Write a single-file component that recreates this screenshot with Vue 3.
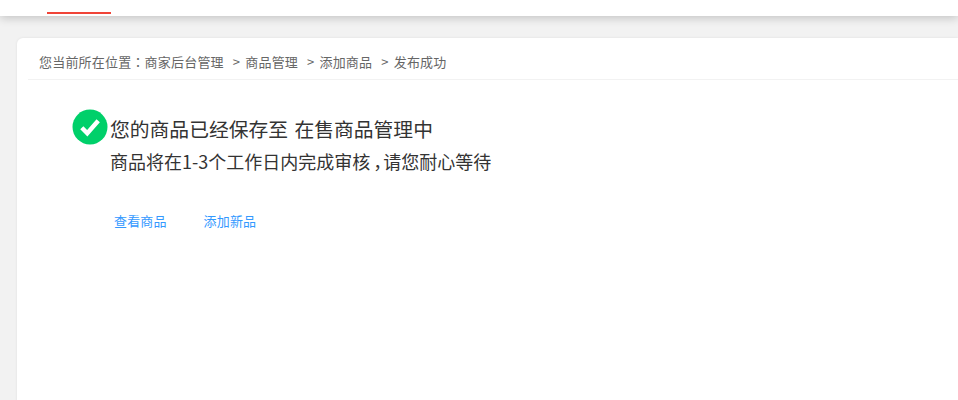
<script setup>
const crumbs = ['商品管理', '添加商品', '发布成功']
</script>

<template>
  <div class="page">
    <header class="topbar">
      <span class="tab-line"></span>
    </header>
    <main class="card">
      <div class="crumbs">
        <span>您当前所在位置<span class="colon">：</span>商家后台管理</span>
        <span v-for="c in crumbs" :key="c" class="crumb"><i>&gt;</i>{{ c }}</span>
      </div>
      <section class="result">
        <div class="headline">
          <svg class="ok" viewBox="0 0 36 36" width="36" height="36">
            <circle cx="18" cy="18" r="17.5" fill="#00d06a" />
            <path d="M9.8 18.8 L15.3 24.3 L26.2 11.8" fill="none" stroke="#fff" stroke-width="4.4" />
          </svg>
          <h1>您的商品已经保存至 在售商品管理中</h1>
        </div>
        <p class="note">商品将在1-3个工作日内完成审核<span class="comma">，</span>请您耐心等待</p>
        <div class="links">
          <a>查看商品</a>
          <a>添加新品</a>
        </div>
      </section>
    </main>
  </div>
</template>

<style>
html, body { margin: 0; background: #f2f2f2; overflow: hidden; }
</style>

<style scoped>
.page {
  width: 958px;
  height: 400px;
  overflow: hidden;
  background: #f2f2f2;
  font-family: "Noto Sans CJK SC", "Liberation Sans", sans-serif;
}
.colon { font-family: "Noto Sans CJK TC", sans-serif; }
.comma {
  padding-left: 3px;
  letter-spacing: -8px;
}
.topbar {
  height: 16px;
  background: #fff;
  box-shadow: 0 2px 10px rgba(0, 0, 0, .2);
  position: relative;
}
.tab-line {
  position: absolute;
  left: 47px;
  top: 12px;
  width: 64px;
  height: 2px;
  background: #f04438;
}
.card {
  margin: 22px 0 0 17px;
  height: 400px;
  background: #fff;
  border-radius: 6px 0 0 0;
  box-shadow: 0 0 3px rgba(0, 0, 0, .08);
}
.crumbs {
  margin-left: 11px;
  padding-left: 11px;
  height: 41px;
  line-height: 47px;
  font-size: 13px;
  letter-spacing: .2px;
  color: #666;
  border-bottom: 1px solid #f2f2f2;
  display: flex;
}
.crumb i {
  font-style: normal;
  margin: 0 5px 0 9px;
}
.result { padding: 29px 0 0 55px; }
.headline {
  display: flex;
  gap: 2px;
}
.ok { flex: none; }
h1 {
  margin: 2px 0 0;
  font-size: 19.8px;
  word-spacing: 2px;
  font-weight: 400;
  color: #333;
  line-height: 36px;
}
.note {
  margin: 1px 0 0 38px;
  font-size: 18px;
  line-height: 26px;
  color: #333;
}
.links {
  margin: 37px 0 0 42px;
  display: flex;
  gap: 37px;
  font-size: 13px;
  letter-spacing: .15px;
  line-height: 20px;
  color: #3399ff;
}
</style>
